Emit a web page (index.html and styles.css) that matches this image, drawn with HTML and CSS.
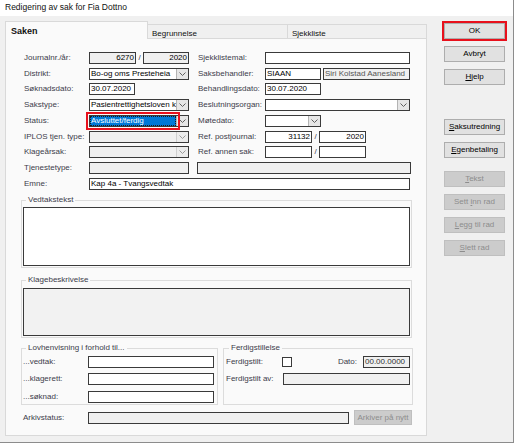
FILE: index.html
```html
<!DOCTYPE html>
<html lang="no">
<head>
<meta charset="utf-8">
<title>Redigering av sak</title>
<link rel="stylesheet" href="styles.css">
</head>
<body>
<div class="window">
  <div class="titlebar">Redigering av sak for Fia Dottno</div>
  <div class="main">
    <div class="tabctl">
      <div class="tabs">
        <div class="tab active">Saken</div>
        <div class="tab">Begrunnelse</div>
        <div class="tab last">Sjekkliste</div>
      </div>
      <div class="panel">
        <div class="formgrid">
          <span class="lbl">Journalnr./år:</span>
          <div class="pair"><div class="inp ro num w47">6270</div><span class="slash">/</span><div class="inp ro num w46">2020</div></div>
          <span class="lbl">Sjekklistemal:</span>
          <div class="inp w145"></div>

          <span class="lbl">Distrikt:</span>
          <div class="combo w100"><span class="val">Bo-og oms Presteheia</span><span class="arrow"><svg width="7" height="4" viewBox="0 0 7 4"><polyline points="0.5,0.5 3.5,3.5 6.5,0.5" fill="none" stroke="#606060" stroke-width="1"/></svg></span></div>
          <span class="lbl">Saksbehandler:</span>
          <div class="pair"><div class="inp w56">SIAAN</div><div class="inp ro dim w87 ml2">Siri Kolstad Aanesland</div></div>

          <span class="lbl">Søknadsdato:</span>
          <div class="inp w46">30.07.2020</div>
          <span class="lbl">Behandlingsdato:</span>
          <div class="inp w56">30.07.2020</div>

          <span class="lbl">Sakstype:</span>
          <div class="combo w100"><span class="val">Pasientrettighetsloven k</span><span class="arrow"><svg width="7" height="4" viewBox="0 0 7 4"><polyline points="0.5,0.5 3.5,3.5 6.5,0.5" fill="none" stroke="#606060" stroke-width="1"/></svg></span></div>
          <span class="lbl">Beslutningsorgan:</span>
          <div class="combo w145"><span class="val"></span><span class="arrow"><svg width="7" height="4" viewBox="0 0 7 4"><polyline points="0.5,0.5 3.5,3.5 6.5,0.5" fill="none" stroke="#606060" stroke-width="1"/></svg></span></div>

          <span class="lbl">Status:</span>
          <div class="combo w100 status"><span class="val sel">Avsluttet/ferdig</span><span class="arrow"><svg width="7" height="4" viewBox="0 0 7 4"><polyline points="0.5,0.5 3.5,3.5 6.5,0.5" fill="none" stroke="#606060" stroke-width="1"/></svg></span><span class="redbox"></span></div>
          <span class="lbl">Møtedato:</span>
          <div class="combo w56"><span class="val"></span><span class="arrow"><svg width="7" height="4" viewBox="0 0 7 4"><polyline points="0.5,0.5 3.5,3.5 6.5,0.5" fill="none" stroke="#606060" stroke-width="1"/></svg></span></div>

          <span class="lbl">IPLOS tjen. type:</span>
          <div class="combo w100 dis"><span class="val"></span><span class="arrow"><svg width="7" height="4" viewBox="0 0 7 4"><polyline points="0.5,0.5 3.5,3.5 6.5,0.5" fill="none" stroke="#9a9a9a" stroke-width="1"/></svg></span></div>
          <span class="lbl">Ref. postjournal:</span>
          <div class="pair"><div class="inp num w47">31132</div><span class="slash">/</span><div class="inp num w47">2020</div></div>

          <span class="lbl">Klageårsak:</span>
          <div class="combo w100 dis"><span class="val"></span><span class="arrow"><svg width="7" height="4" viewBox="0 0 7 4"><polyline points="0.5,0.5 3.5,3.5 6.5,0.5" fill="none" stroke="#9a9a9a" stroke-width="1"/></svg></span></div>
          <span class="lbl">Ref. annen sak:</span>
          <div class="pair"><div class="inp num w47"></div><span class="slash">/</span><div class="inp num w47"></div></div>

          <span class="lbl">Tjenestetype:</span>
          <div class="inp ro w100"></div>
          <div class="inp ro wide"></div>

          <span class="lbl">Emne:</span>
          <div class="inp emne">Kap 4a - Tvangsvedtak</div>
        </div>

        <fieldset class="grp full vedtak">
          <legend>Vedtakstekst</legend>
          <div class="textbox"></div>
        </fieldset>

        <fieldset class="grp full klage">
          <legend>Klagebeskrivelse</legend>
          <div class="textbox ro"></div>
        </fieldset>

        <div class="bottomrow">
          <fieldset class="grp lov">
            <legend>Lovhenvisning i forhold til...</legend>
            <div class="lrow"><span class="lbl w65">...vedtak:</span><div class="inp w126"></div></div>
            <div class="lrow"><span class="lbl w65">...klagerett:</span><div class="inp w126"></div></div>
            <div class="lrow r3"><span class="lbl w65">...søknad:</span><div class="inp w126"></div></div>
          </fieldset>
          <fieldset class="grp ferd">
            <legend>Ferdigstillelse</legend>
            <div class="lrow"><span class="lbl w56">Ferdigstilt:</span><span class="check"></span><span class="spacer"></span><span class="lbl">Dato:</span><div class="inp ro date w47">00.00.0000</div></div>
            <div class="lrow r2"><span class="lbl w57">Ferdigstilt av:</span><div class="inp ro w127"></div></div>
          </fieldset>
        </div>

        <div class="arkivrow">
          <span class="lbl w65">Arkivstatus:</span>
          <div class="inp ro w261"></div>
          <div class="btn dis small">Arkiver på nytt</div>
        </div>
      </div>
    </div>

    <div class="buttons">
      <div class="btn focus">OK</div>
      <div class="btn">Avbryt</div>
      <div class="btn"><u>H</u>jelp</div>
      <div class="btn gap1"><u>S</u>aksutredning</div>
      <div class="btn"><u>E</u>genbetaling</div>
      <div class="btn dis gap2"><u>T</u>ekst</div>
      <div class="btn dis">Sett <u>i</u>nn rad</div>
      <div class="btn dis"><u>L</u>egg til rad</div>
      <div class="btn dis"><u>S</u>lett rad</div>
    </div>
  </div>
</div>
</body>
</html>
```

FILE: styles.css
```css
* { box-sizing: border-box; }

body {
  margin: 0;
  background: #ffffff;
  font-family: "Liberation Sans", Arial, sans-serif;
  font-size: 8px;
  line-height: 10px;
  color: #000;
}

.window {
  width: 514px;
  height: 443px;
  background: #f0f0f0;
  border-right: 1px solid #8c8c8c;
  border-bottom: 1px solid #8c8c8c;
}

.titlebar {
  height: 16px;
  background: #ffffff;
  padding-left: 5px;
  font-size: 8.5px;
  line-height: 15px;
  color: #111;
}

.main { display: flex; }

/* tab control */
.tabctl {
  margin: 5px 0 0 5px;
  width: 422px;
}

.tabs {
  display: flex;
  align-items: flex-end;
  height: 18px;
  margin-bottom: -1px;
  position: relative;
  z-index: 1;
}

.tab {
  width: 141px;
  height: 14px;
  margin: 0 0 1px -1px;
  border: 1px solid #d9d9d9;
  border-bottom: none;
  background: #f0f0f0;
  padding: 3px 0 0 4px;
  line-height: 11px;
  color: #111;
}

.tab.last { width: 140px; }

.tab.active {
  width: 143px;
  height: 18px;
  margin: 0;
  background: #fafafa;
  font-weight: bold;
  font-size: 9px;
  padding: 0 0 0 5px;
  line-height: 19px;
}

.panel {
  height: 398px;
  border: 1px solid #d9d9d9;
  background: #fafafa;
}

/* form grid */
.formgrid {
  display: grid;
  grid-template-columns: 65px 109px 67px 145px;
  grid-template-rows: 16px 15px 16px 16px 16px 15px 16px 16px 16px;
  align-items: center;
  justify-items: start;
  margin: 11px 0 0 18px;
}

.lbl {
  color: #3c3c4a;
  white-space: nowrap;
}

.inp {
  height: 12px;
  border: 1px solid #3a3a3a;
  background: #ffffff;
  padding: 0 1px;
  line-height: 10px;
  white-space: nowrap;
  overflow: hidden;
}

.ro { background: #f0f0f0; }
.dim { color: #555; }
.num { text-align: right; }
.date { color: #333; }

.w46 { width: 46px; }
.w47 { width: 47px; }
.w56 { width: 56px; }
.w87 { width: 87px; }
.w100 { width: 100px; }
.w126 { width: 126px; }
.w127 { width: 127px; }
.w145 { width: 145px; }
.w261 { width: 261px; }
.ml2 { margin-left: 2px; }

.wide {
  grid-column: 3 / span 2;
  width: 214px;
  margin-left: -1px;
}

.emne {
  grid-column: 2 / span 3;
  width: 321px;
}

.pair {
  display: flex;
  align-items: center;
}

.slash {
  width: 7px;
  text-align: center;
  color: #3c3c4a;
}

.combo {
  height: 12px;
  display: flex;
  border: 1px solid #3a3a3a;
  background: #ffffff;
}

.combo .val {
  flex: 1;
  min-width: 0;
  padding: 0 1px;
  line-height: 10px;
  white-space: nowrap;
  overflow: hidden;
}

.combo .arrow {
  width: 12px;
  background: #e6e6e6;
  border-left: 1px solid #b4b4b4;
  display: flex;
  align-items: center;
  justify-content: center;
}

.combo.dis { background: #f0f0f0; }
.combo.dis .arrow { background: #ececec; border-left-color: #cfcfcf; }

.combo.status { position: relative; }

.combo .val.sel {
  background: #0078d7;
  color: #ffffff;
  outline: 1px dotted #1a1a1a;
  outline-offset: -1px;
}

.redbox {
  position: absolute;
  left: -4px;
  top: -4px;
  width: 94px;
  height: 18px;
  border: 2px solid #e8101c;
}

/* group boxes */
.grp {
  margin: 0;
  min-width: 0;
  border: 1px solid #dcdcdc;
  padding: 0 1px 1px 1px;
}

.grp legend {
  padding: 0 2px;
  margin-left: 3px;
  line-height: 10px;
  color: #3c3c4a;
}

.full {
  width: 391px;
  margin-left: 15px;
}

.vedtak { margin-top: 3px; }
.klage { margin-top: 7px; }

.textbox {
  height: 59px;
  margin-top: 2px;
  border: 1px solid #3a3a3a;
  background: #ffffff;
}

.klage .textbox {
  height: 48px;
  margin-top: 3px;
  background: #f2f2f2;
}

.bottomrow {
  display: flex;
  margin: 5px 0 0 15px;
}

.lov {
  width: 197px;
  height: 62px;
}

.ferd {
  width: 190px;
  height: 62px;
  margin-left: 5px;
  padding-left: 2px;
  padding-right: 2px;
}

.lrow {
  display: flex;
  align-items: center;
  height: 12px;
  margin-top: 5px;
}

.lrow:first-of-type { margin-top: 3px; }
.lrow.r3 { margin-top: 6px; }

.w65 { width: 65px; }
.w57 { width: 57px; }

.check {
  width: 10px;
  height: 10px;
  border: 1px solid #3a3a3a;
  background: #ffffff;
}

.spacer { flex: 1; }

.ferd .date { margin-left: 6px; }

.arkivrow {
  display: flex;
  align-items: center;
  height: 15px;
  margin: 5px 0 0 17px;
}

/* buttons */
.buttons {
  margin-left: 17px;
  padding-top: 7px;
  width: 61px;
  display: flex;
  flex-direction: column;
}

.btn {
  height: 16px;
  width: 61px;
  border: 1px solid #adadad;
  background: #e1e1e1;
  text-align: center;
  line-height: 14px;
  white-space: nowrap;
  color: #000;
  margin-bottom: 7px;
}

.btn u { text-decoration: underline; text-underline-offset: 1px; }

.btn.focus { outline: 2px solid #e8101c; }

.btn.gap1 { margin-top: 27px; }
.btn.gap2 { margin-top: 6px; }

.btn.dis {
  background: #cccccc;
  border-color: #bfbfbf;
  color: #8d8d8d;
}

.btn.small {
  width: 58px;
  height: 15px;
  margin: 0 0 0 5px;
  line-height: 13px;
}
```
